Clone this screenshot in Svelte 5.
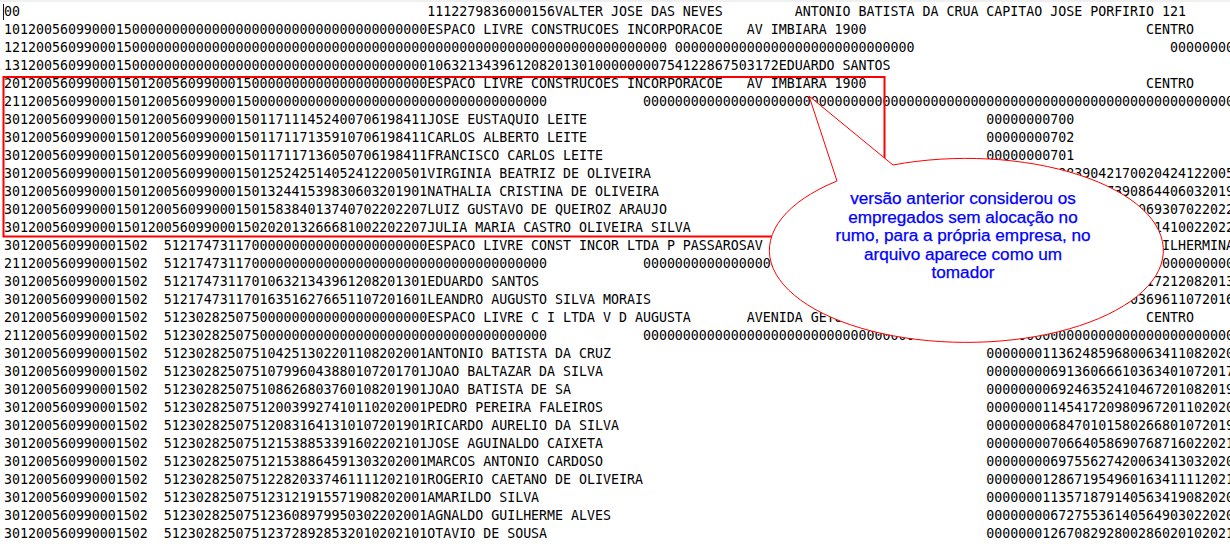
<script>
  const zeros = (n) => "0".repeat(n);

  // build one fixed width record from [column, text] pairs
  function rec(...parts) {
    let s = "";
    for (const [col, text] of parts) s = s.padEnd(col, " ") + text;
    return s;
  }
  const head = (h) => h.padEnd(53, "0");
  const emp = "3012005609900015012005609900015";
  const emp2 = "301200560990001502  ";
  const zerosLine = (h) => rec([0, h.padEnd(68, "0")], [80, zeros(80)]);

  const rows = [
    rec([0, "00"], [53, "1112279836000156VALTER JOSE DAS NEVES"], [99, "ANTONIO BATISTA DA CRUA CAPITAO JOSE PORFIRIO 121"]),
    rec([0, head("1012005609900015")], [53, "ESPACO LIVRE CONSTRUCOES INCORPORACOE"], [93, "AV IMBIARA 1900"], [143, "CENTRO"]),
    rec([0, "1212005609900015".padEnd(83, "0")], [84, zeros(30)], [146, zeros(12)]),
    rec([0, head("1312005609900015")], [53, "10632134396120820130100000000754122867503172EDUARDO SANTOS"]),
    rec([0, head("2012005609900015012005609900015")], [53, "ESPACO LIVRE CONSTRUCOES INCORPORACOE"], [93, "AV IMBIARA 1900"], [143, "CENTRO"]),
    zerosLine("2112005609900015012005609900015"),
    rec([0, emp + "0117111452400706198411JOSE EUSTAQUIO LEITE"], [123, "00000000700"]),
    rec([0, emp + "0117117135910706198411CARLOS ALBERTO LEITE"], [123, "00000000702"]),
    rec([0, emp + "0117117136050706198411FRANCISCO CARLOS LEITE"], [123, "00000000701"]),
    rec([0, emp + "0125242514052412200501VIRGINIA BEATRIZ DE OLIVEIRA"], [123, "0000000169839042170020424122005"]),
    rec([0, emp + "0132441539830603201901NATHALIA CRISTINA DE OLIVEIRA"], [123, "0000000112647397390864406032019"]),
    rec([0, emp + "0158384013740702202207LUIZ GUSTAVO DE QUEIROZ ARAUJO"], [123, "0000000125587401000069307022022"]),
    rec([0, emp + "0202013266681002202207JULIA MARIA CASTRO OLIVEIRA SILVA"], [123, "00000001260668132665" + "51410022022"]),
    rec([0, head(emp2 + "51217473117")], [53, "ESPACO LIVRE CONST INCOR LTDA P PASSAROS"], [93, "AV JOSE CARLOS 100"], [143, "GUILHERMINA"]),
    zerosLine(emp2.replace("30", "21") + "51217473117"),
    rec([0, emp2 + "512174731170106321343961208201301EDUARDO SANTOS"], [123, "00000000754122867503" + "17212082013"]),
    rec([0, emp2 + "512174731170163516276651107201601LEANDRO AUGUSTO SILVA MORAIS"], [123, "000000011635162766" + "0369611072016"]),
    rec([0, head(emp2.replace("30", "20") + "512302825075")], [53, "ESPACO LIVRE C I LTDA V D AUGUSTA"], [93, "AVENIDA GETULIO VARGAS 500"], [143, "CENTRO"]),
    zerosLine(emp2.replace("30", "21") + "512302825075"),
    rec([0, emp2 + "512302825075104251302201108202001ANTONIO BATISTA DA CRUZ"], [123, "0000000113624859680063411082020"]),
    rec([0, emp2 + "512302825075107996043880107201701JOAO BALTAZAR DA SILVA"], [123, "0000000069136066610363401072017"]),
    rec([0, emp2 + "512302825075108626803760108201901JOAO BATISTA DE SA"], [123, "0000000069246352410467201082019"]),
    rec([0, emp2 + "512302825075120039927410110202001PEDRO PEREIRA FALEIROS"], [123, "0000000114541720980967201102020"]),
    rec([0, emp2 + "512302825075120831641310107201901RICARDO AURELIO DA SILVA"], [123, "0000000068470101580266801072019"]),
    rec([0, emp2 + "512302825075121538853391602202101JOSE AGUINALDO CAIXETA"], [123, "0000000070664058690768716022021"]),
    rec([0, emp2 + "512302825075121538864591303202001MARCOS ANTONIO CARDOSO"], [123, "0000000069755627420063413032020"]),
    rec([0, emp2 + "512302825075122820337461111202101ROGERIO CAETANO DE OLIVEIRA"], [123, "0000000128671954960163411112021"]),
    rec([0, emp2 + "512302825075123121915571908202001AMARILDO SILVA"], [123, "0000000113571879140563419082020"]),
    rec([0, emp2 + "512302825075123608979950302202001AGNALDO GUILHERME ALVES"], [123, "0000000067275536140564903022020"]),
    rec([0, emp2 + "512302825075123728928532010202101OTAVIO DE SOUSA"], [123, "0000000126708292800286020102021"]),
  ];

  const note = [
    "versão anterior considerou os",
    "empregados sem alocação no",
    "rumo, para a própria empresa, no",
    "arquivo aparece como um",
    "tomador",
  ];
</script>

<div class="editor">
  <div class="lines">
    {#each rows as row}
      <div class="row">{row}</div>
    {/each}
  </div>

  <span class="caret"></span>

  <svg class="marks" width="1230" height="546" viewBox="0 0 1230 546">
    <rect x="3.5" y="77" width="881" height="159.5" fill="none" stroke="#f00" stroke-width="2" />
    <path d="M837 181 L809 96 L893 165 A197 92 0 1 1 837 181 Z" fill="#fff" stroke="#f00" stroke-width="1" />
  </svg>

  <div class="note">
    {#each note as text}
      <div>{text}</div>
    {/each}
  </div>
</div>

<style>
  :global(body) {
    background: #fff;
    overflow: hidden;
  }
  .editor {
    position: relative;
    width: 1230px;
    height: 546px;
    overflow: hidden;
    border-top: 2px solid #f0f0f0;
    box-sizing: border-box;
  }
  .lines {
    padding: 1px 0 0 4px;
  }
  .row {
    height: 18px;
    line-height: 18px;
    font-family: "DejaVu Sans Mono", monospace;
    font-size: 13.28px;
    color: #000;
    white-space: pre;
  }
  .caret {
    position: absolute;
    left: 3px;
    top: 2px;
    width: 1px;
    height: 16px;
    background: #00184a;
  }
  .marks {
    position: absolute;
    left: 0;
    top: -2px;
  }
  .note {
    position: absolute;
    left: 763px;
    top: 188px;
    width: 400px;
    font-family: "Liberation Sans", Arial, sans-serif;
    font-size: 16px;
    line-height: 18.5px;
    color: #0000ff;
    -webkit-text-stroke: 0.25px #0000ff;
    text-align: center;
    white-space: nowrap;
    transform: scaleX(1.07);
  }
</style>
